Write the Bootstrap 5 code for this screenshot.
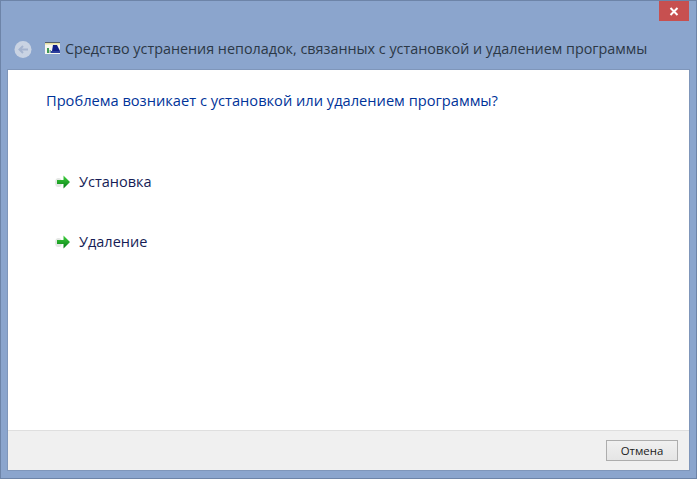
<!DOCTYPE html>
<html lang="ru">
<head>
<meta charset="utf-8">
<title>Средство устранения неполадок</title>
<link href="https://cdn.jsdelivr.net/npm/bootstrap@5.3.0/dist/css/bootstrap.min.css" rel="stylesheet">
<style>
html,body{margin:0;height:479px;overflow:hidden;background:#8ba5cd;font-family:"Open Sans","Noto Sans",sans-serif;}
.win-frame{height:479px;width:697px;border:1px solid #6d84a8;padding:0 7px 8px 7px;background:#8ba5cd;}
.win-top{height:20px;}
.win-close{width:30px;height:20px;background:#c75050;border:0;padding:0;margin:0;}
.win-head{height:49px;padding:20px 0 0 6px;}
.win-ico{margin:1px 0 0 13px;}
.win-title{font-size:14.35px;line-height:16px;color:#2b3846;margin-left:5px;white-space:nowrap;}
.win-body{height:400px;background:#fff;box-shadow:0 0 0 1px #7f96ba;}
.win-main{height:360px;padding:19px 38px;}
.win-q{font-size:14.65px;line-height:22px;color:#003399;margin:0 0 59px 0;font-weight:400;}
.cmd-item{height:60px;padding-left:9px;color:#151c55;font-size:14.5px;}
.cmd-item span{line-height:22px;margin-top:1px;}
.cmd-arrow{margin-top:3px;}
.win-foot{height:40px;background:#f0f0f0;border-top:1px solid #dfdfdf;padding:9px 11px 0 0;}
.win-btn{width:72px;height:21px;padding:0;font-size:11.4px;line-height:19px;color:#1a1a1a;border:1px solid #adadad;border-radius:0;background:linear-gradient(#f0f0f0,#e5e5e5);}
</style>
</head>
<body>
<div class="win-frame d-flex flex-column">
  <div class="win-top d-flex justify-content-end">
    <button class="win-close d-flex align-items-center justify-content-center" type="button" aria-label="Закрыть">
      <svg width="10" height="9" viewBox="0 0 10 9"><path d="M1.500 1 8.500 8M8.500 1 1.500 8" stroke="#fff" stroke-width="2" fill="none"/></svg>
    </button>
  </div>
  <div class="win-head d-flex align-items-start">
    <svg width="18" height="17" viewBox="0 0 18 17" class="flex-shrink-0">
      <circle cx="9" cy="8.500" r="8.500" fill="#c9d3e3"/>
      <path d="M14 8.500H5.500M9 5 5.500 8.500 9 12" stroke="#a5b4cf" stroke-width="2" fill="none"/>
    </svg>
    <svg width="15" height="12" viewBox="0 0 15 12" class="flex-shrink-0 win-ico">
      <rect width="15" height="12" fill="#f6f6f0"/>
      <rect width="15" height="1" fill="#55606a"/>
      <rect y="1" width="15" height="1.500" fill="#e6dfa0"/>
      <path d="M8 3h4l3 6H7z" fill="#101f86"/>
      <rect x="6" y="9" width="9" height="2" fill="#2d3f9c"/>
      <rect x="2" y="6" width="2" height="5" fill="#3f9a55"/>
      <rect x="4.500" y="8" width="1.500" height="3" fill="#7aa0a0"/>
    </svg>
    <span class="win-title">Средство устранения неполадок, связанных с установкой и удалением программы</span>
  </div>
  <div class="win-body d-flex flex-column">
    <div class="win-main">
      <h1 class="win-q">Проблема возникает с установкой или удалением программы?</h1>
      <div class="cmd-item d-flex align-items-start gap-2">
        <svg width="16" height="16" viewBox="0 0 16 16" class="cmd-arrow flex-shrink-0"><defs><linearGradient id="ga" x1="0" y1="0" x2="0" y2="1"><stop offset="0" stop-color="#3fd23c"/><stop offset="1" stop-color="#067d18"/></linearGradient></defs><ellipse cx="3.500" cy="9.500" rx="3.500" ry="4.500" fill="#e4e7e4"/><path d="M2 7h6.500V2.500L15 9 8.500 15.500V11H2z" fill="url(#ga)"/></svg>
        <span>Установка</span>
      </div>
      <div class="cmd-item d-flex align-items-start gap-2">
        <svg width="16" height="16" viewBox="0 0 16 16" class="cmd-arrow flex-shrink-0"><ellipse cx="3.500" cy="9.500" rx="3.500" ry="4.500" fill="#e4e7e4"/><path d="M2 7h6.500V2.500L15 9 8.500 15.500V11H2z" fill="url(#ga)"/></svg>
        <span>Удаление</span>
      </div>
    </div>
    <div class="win-foot d-flex justify-content-end align-items-start">
      <button class="win-btn" type="button">Отмена</button>
    </div>
  </div>
</div>
</body>
</html>
